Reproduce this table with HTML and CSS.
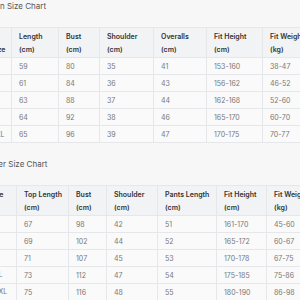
FILE: index.html
```html
<!DOCTYPE html>
<html lang="en">
<head>
  <meta charset="utf-8">
  <title>Size Charts</title>
  <link rel="stylesheet" href="styles.css">
</head>
<body>
  <div class="charts">
    <section class="chart chart-women">
      <h2 class="chart-title">Women Size Chart</h2>
      <table class="size-table">
        <colgroup>
          <col style="width: 31px">
          <col style="width: 47px">
          <col style="width: 41px">
          <col style="width: 54px">
          <col style="width: 53px">
          <col style="width: 56px">
          <col style="width: 56px">
        </colgroup>
        <thead>
          <tr>
            <th class="size-col size-col-bottom">Size</th>
            <th>Length<br>(cm)</th>
            <th>Bust<br>(cm)</th>
            <th>Shoulder<br>(cm)</th>
            <th>Overalls<br>(cm)</th>
            <th>Fit Height<br>(cm)</th>
            <th>Fit Weight<br>(kg)</th>
          </tr>
        </thead>
        <tbody>
          <tr><td class="size-col">S</td><td>59</td><td>80</td><td>35</td><td>41</td><td>153-160</td><td>38-47</td></tr>
          <tr><td class="size-col">M</td><td>61</td><td>84</td><td>36</td><td>43</td><td>156-162</td><td>46-52</td></tr>
          <tr><td class="size-col">L</td><td>63</td><td>88</td><td>37</td><td>44</td><td>162-168</td><td>52-60</td></tr>
          <tr><td class="size-col">XL</td><td>64</td><td>92</td><td>38</td><td>46</td><td>165-170</td><td>60-70</td></tr>
          <tr><td class="size-col">XXL</td><td>65</td><td>96</td><td>39</td><td>47</td><td>170-175</td><td>70-77</td></tr>
        </tbody>
      </table>
    </section>

    <section class="chart chart-men">
      <h2 class="chart-title">Father Size Chart</h2>
      <table class="size-table">
        <colgroup>
          <col style="width: 36px">
          <col style="width: 52px">
          <col style="width: 38px">
          <col style="width: 51px">
          <col style="width: 59px">
          <col style="width: 50px">
          <col style="width: 64px">
        </colgroup>
        <thead>
          <tr>
            <th class="size-col">Size</th>
            <th>Top Length<br>(cm)</th>
            <th>Bust<br>(cm)</th>
            <th>Shoulder<br>(cm)</th>
            <th>Pants Length<br>(cm)</th>
            <th>Fit Height<br>(cm)</th>
            <th>Fit Weight<br>(kg)</th>
          </tr>
        </thead>
        <tbody>
          <tr><td class="size-col">S</td><td>67</td><td>98</td><td>42</td><td>51</td><td>161-170</td><td>45-60</td></tr>
          <tr><td class="size-col">M</td><td>69</td><td>102</td><td>44</td><td>52</td><td>165-172</td><td>60-67</td></tr>
          <tr><td class="size-col">L</td><td>71</td><td>107</td><td>45</td><td>53</td><td>170-178</td><td>67-75</td></tr>
          <tr><td class="size-col">XXL</td><td>73</td><td>112</td><td>47</td><td>54</td><td>175-185</td><td>75-86</td></tr>
          <tr><td class="size-col">XXXL</td><td>75</td><td>116</td><td>48</td><td>55</td><td>180-190</td><td>86-98</td></tr>
        </tbody>
      </table>
    </section>
  </div>
</body>
</html>
```

FILE: styles.css
```css
* {
  margin: 0;
  padding: 0;
  box-sizing: border-box;
}

html {
  font-size: 7px;
}

body {
  overflow: hidden;
  background-color: #F7F7F8;
  color: #333333;
  font-family: "Inter", "Liberation Sans", sans-serif;
}

.charts {
  width: 360px;
  margin-left: -20px;
}

.chart-title {
  margin-bottom: 14px;
  font-size: 8px;
  font-weight: 400;
  line-height: 14px;
  color: #555555;
}

.chart-women .chart-title {
  margin-top: -1px;
  margin-left: -4px;
}

.chart-men .chart-title {
  margin-top: 14px;
  padding-left: 2px;
}

.size-table {
  table-layout: fixed;
  border-collapse: collapse;
  background-color: #FAFAFB;
}

.chart-women .size-table {
  width: 338px;
}

.chart-men .size-table {
  width: 350px;
}

th,
td {
  border: 1px solid #E6E7EB;
  padding: 0 7px;
  text-align: left;
  white-space: nowrap;
}

th {
  padding-top: 2px;
  padding-bottom: 1px;
  background-color: #F2F3F5;
  color: #333333;
  font-size: 7px;
  font-weight: 600;
  line-height: 13px;
  vertical-align: middle;
}

td {
  height: 17px;
  color: #777777;
  font-size: 7px;
  line-height: 15px;
}

.size-col {
  padding-left: 10px;
}

.chart-women .size-col-bottom {
  vertical-align: bottom;
}

.chart-men .size-col {
  padding-left: 8px;
  vertical-align: top;
}

.chart-men th.size-col {
  padding-left: 8px;
}
```
